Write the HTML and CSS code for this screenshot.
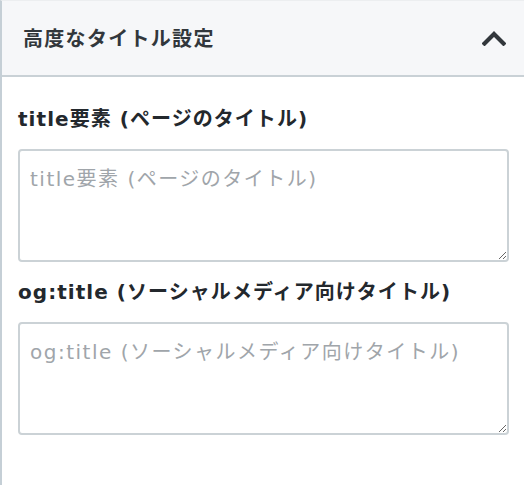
FILE: index.html
```html
<!DOCTYPE html>
<html lang="ja">
<head>
<meta charset="utf-8">
<link rel="stylesheet" href="styles.css">
</head>
<body>
<div class="panel">
  <div class="panel-header">
    <h2 class="panel-title">高度なタイトル設定</h2>
    <svg class="chevron" width="24" height="16" viewBox="0 0 24 16" aria-hidden="true">
      <path d="M2.5 13.5 L12 4 L21.5 13.5" fill="none" stroke="#32373c" stroke-width="4.2" stroke-linecap="square" stroke-linejoin="miter"/>
    </svg>
  </div>
  <div class="panel-body">
    <div class="field">
      <label class="field-label" for="t1">title要素 (ページのタイトル)</label>
      <textarea id="t1" class="field-input" placeholder="title要素 (ページのタイトル)"></textarea>
    </div>
    <div class="field">
      <label class="field-label" for="t2">og:title (ソーシャルメディア向けタイトル)</label>
      <textarea id="t2" class="field-input" placeholder="og:title (ソーシャルメディア向けタイトル)"></textarea>
    </div>
  </div>
</div>
</body>
</html>
```

FILE: styles.css
```css
html, body {
  margin: 0;
  padding: 0;
  background: #ffffff;
}

body {
  font-family: "DejaVu Sans", "Noto Sans CJK JP", sans-serif;
  color: #23282d;
}

.panel {
  border-left: 2px solid #c5cfd6;
  border-top: 1px solid #eceef0;
  min-height: 485px;
  box-sizing: border-box;
}

.panel-header {
  display: flex;
  align-items: center;
  justify-content: space-between;
  height: 74px;
  padding: 0 18px 0 21px;
  background: #f6f7f9;
  border-bottom: 2px solid #c9d1d6;
}

.panel-title {
  margin: 0;
  font-size: 20px;
  font-weight: bold;
  letter-spacing: 1.3px;
  color: #32373c;
  line-height: 1;
  font-family: "Noto Sans CJK JP", sans-serif;
}

.chevron {
  display: block;
  margin-top: 0;
}

.panel-body {
  padding: 30px 15px 0 16px;
  display: flex;
  flex-direction: column;
  gap: 18px;
}

.field {
  display: flex;
  flex-direction: column;
  gap: 18px;
}

.field-label {
  font-size: 20px;
  font-weight: bold;
  line-height: 24px;
  color: #23282d;
  letter-spacing: 1.05px;
}

.field-input {
  display: block;
  box-sizing: border-box;
  width: 100%;
  height: 113px;
  margin: 0;
  padding: 15px 10px;
  border: 2px solid #cbd2d6;
  border-radius: 4px;
  background: #ffffff;
  font-family: "DejaVu Sans", "Noto Sans CJK JP", sans-serif;
  font-size: 20px;
  line-height: 26px;
  letter-spacing: 1.5px;
  color: #32373c;
  resize: vertical;
}

.field-input::placeholder {
  color: #a0a5aa;
  opacity: 1;
}
```
